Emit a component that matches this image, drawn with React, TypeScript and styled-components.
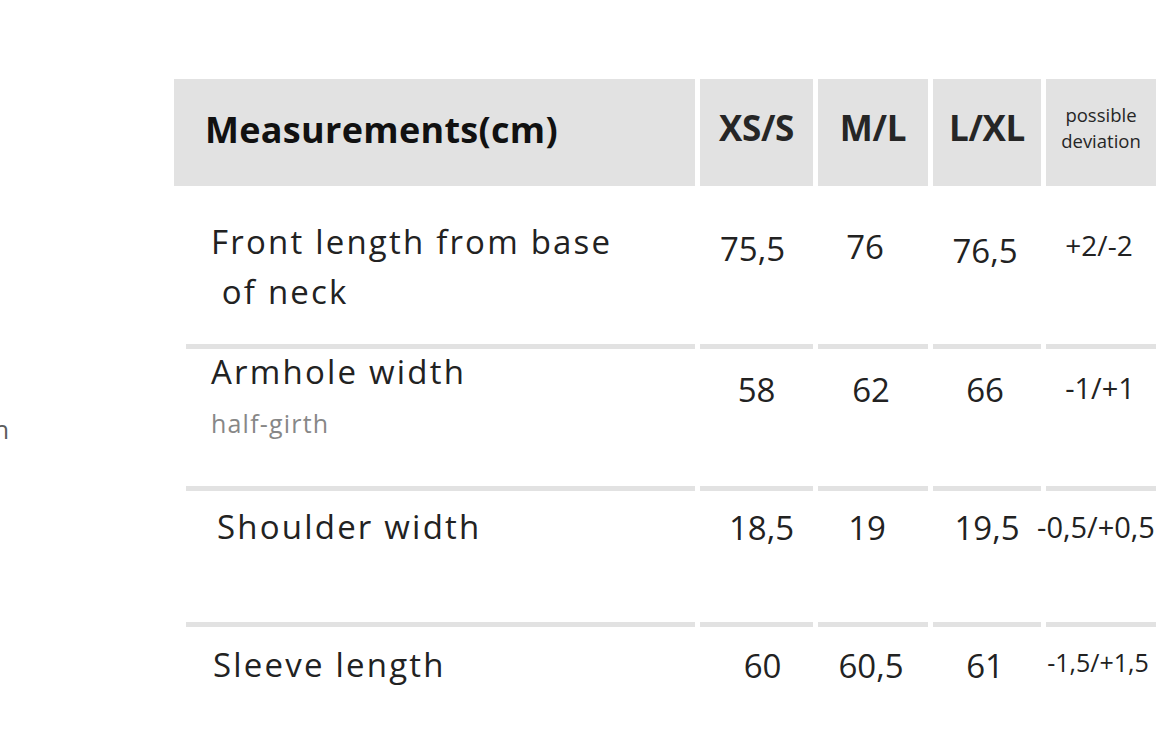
import styled, { createGlobalStyle } from "styled-components";

const GlobalStyle = createGlobalStyle`
  body {
    margin: 0;
    background: #ffffff;
    font-family: "Open Sans", "Noto Sans", sans-serif;
    color: #222222;
  }
`;

const Page = styled.div`
  display: flex;
  align-items: flex-start;
  width: 1160px;
  height: 753px;
  overflow: hidden;
`;

const SideNote = styled.div`
  width: 9px;
  margin-top: 414px;
  display: flex;
  justify-content: flex-end;
  overflow: hidden;
  white-space: nowrap;
  font-size: 25px;
  line-height: 30px;
  color: #5c5c5c;
`;

const Table = styled.div`
  margin-left: 165px;
  margin-top: 79px;
  display: grid;
  grid-template-columns: 521px 113px 110px 108px 110px;
  grid-template-rows: 107px 158px 142px 136px 136px;
  column-gap: 5px;
  flex-shrink: 0;
`;

const HeadCell = styled.div<{ $title?: boolean; $small?: boolean }>`
  background: #e2e2e2;
  display: flex;
  align-items: center;
  justify-content: ${(p) => (p.$title ? "flex-start" : "center")};
  padding-left: ${(p) => (p.$title ? "31px" : "0")};
  padding-bottom: ${(p) => (p.$title ? "6px" : "9px")};
  box-sizing: border-box;
  font-weight: ${(p) => (p.$small ? 400 : 700)};
  font-size: ${(p) => (p.$small ? "18.5px" : p.$title ? "36px" : "35px")};
  line-height: ${(p) => (p.$small ? "26px" : "40px")};
  letter-spacing: ${(p) => (p.$small ? "0" : p.$title ? "0.3px" : "-0.3px")};
  color: ${(p) => (p.$title ? "#111111" : "#262626")};
  text-align: center;
`;

const LabelCell = styled.div<{ $top: number; $indent: number; $ruled: boolean }>`
  margin-left: 12px;
  border-top: ${(p) => (p.$ruled ? "5px solid #e2e2e2" : "none")};
  padding-top: ${(p) => p.$top}px;
  padding-left: ${(p) => p.$indent}px;
  box-sizing: border-box;
`;

const Label = styled.div<{ $lh: number }>`
  font-size: 33px;
  line-height: ${(p) => p.$lh}px;
  letter-spacing: 2.2px;
  color: #222222;
  white-space: nowrap;
`;

const SubLabel = styled.div`
  font-size: 25px;
  line-height: 56px;
  letter-spacing: 1.2px;
  color: #878787;
`;

const ValueCell = styled.div<{ $top: number; $dx: number; $size: number; $ruled: boolean }>`
  border-top: ${(p) => (p.$ruled ? "5px solid #e2e2e2" : "none")};
  padding-top: ${(p) => p.$top}px;
  padding-left: ${(p) => Math.max(0, p.$dx * 2)}px;
  padding-right: ${(p) => Math.max(0, -p.$dx * 2)}px;
  box-sizing: border-box;
  display: flex;
  justify-content: center;
  align-items: flex-start;
  font-size: ${(p) => p.$size}px;
  line-height: 46px;
  color: #222222;
  white-space: nowrap;
`;

type Value = { v: string; top: number; dx?: number; size?: number };

type Row = {
  label: string[];
  sub?: string;
  top: number;
  indent: number;
  lh: number;
  values: Value[];
};

const rows: Row[] = [
  {
    label: ["Front length from base", "\u00a0of neck"],
    top: 31,
    indent: 25,
    lh: 50,
    values: [
      { v: "75,5", top: 40, dx: -4 },
      { v: "76", top: 38, dx: -8 },
      { v: "76,5", top: 42, dx: -2 },
      { v: "+2/-2", top: 36, dx: -2, size: 28 },
    ],
  },
  {
    label: ["Armhole width"],
    sub: "half-girth",
    top: 0,
    indent: 25,
    lh: 46,
    values: [
      { v: "58", top: 18 },
      { v: "62", top: 18, dx: -2 },
      { v: "66", top: 18, dx: -2 },
      { v: "-1/+1", top: 16, dx: -1, size: 29 },
    ],
  },
  {
    label: ["Shoulder width"],
    top: 13,
    indent: 31,
    lh: 46,
    values: [
      { v: "18,5", top: 14, dx: 5 },
      { v: "19", top: 14, dx: -6 },
      { v: "19,5", top: 14 },
      { v: "-0,5/+0,5", top: 13, dx: -5, size: 29 },
    ],
  },
  {
    label: ["Sleeve length"],
    top: 15,
    indent: 27,
    lh: 46,
    values: [
      { v: "60", top: 16, dx: 6 },
      { v: "60,5", top: 16, dx: -2 },
      { v: "61", top: 16, dx: -2 },
      { v: "-1,5/+1,5", top: 12, dx: -3, size: 25 },
    ],
  },
];

export default function App() {
  return (
    <>
      <GlobalStyle />
      <Page>
        <SideNote>length</SideNote>
        <Table>
          <HeadCell $title>Measurements(cm)</HeadCell>
          <HeadCell>XS/S</HeadCell>
          <HeadCell>M/L</HeadCell>
          <HeadCell>L/XL</HeadCell>
          <HeadCell $small>
            possible
            <br />
            deviation
          </HeadCell>
          {rows.map((row, i) => (
            <>
              <LabelCell key={`l${i}`} $top={row.top} $indent={row.indent} $ruled={i > 0}>
                {row.label.map((line) => (
                  <Label key={line} $lh={row.lh}>
                    {line}
                  </Label>
                ))}
                {row.sub && <SubLabel>{row.sub}</SubLabel>}
              </LabelCell>
              {row.values.map((val, j) => (
                <ValueCell
                  key={`v${i}-${j}`}
                  $top={val.top}
                  $dx={val.dx ?? 0}
                  $size={val.size ?? 33}
                  $ruled={i > 0}
                >
                  {val.v}
                </ValueCell>
              ))}
            </>
          ))}
        </Table>
      </Page>
    </>
  );
}
